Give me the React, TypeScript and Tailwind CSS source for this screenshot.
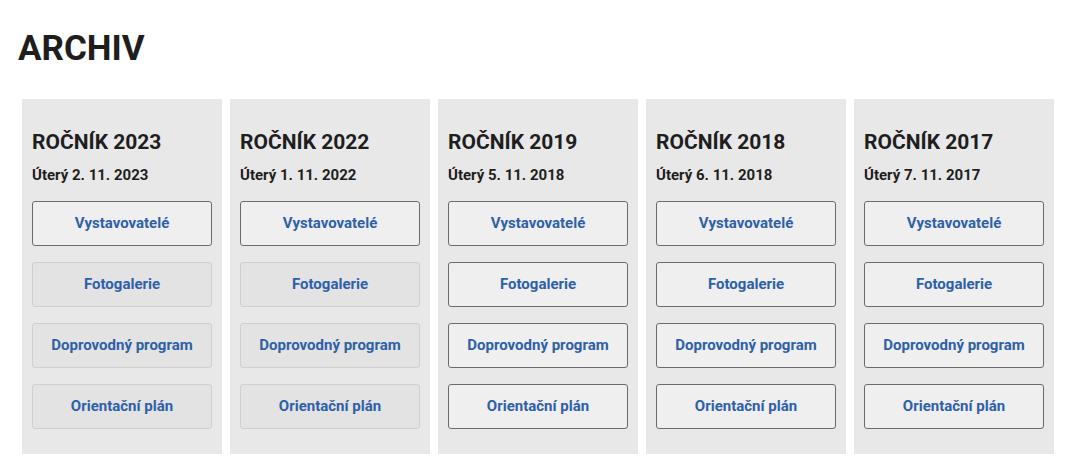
import React from 'react';

interface Rocnik {
  year: string;
  date: string;
  // first two years have only exhibitors published, the rest look muted
  muted: boolean;
}

const rocniky: Rocnik[] = [
  { year: '2023', date: 'Úterý 2. 11. 2023', muted: true },
  { year: '2022', date: 'Úterý 1. 11. 2022', muted: true },
  { year: '2019', date: 'Úterý 5. 11. 2018', muted: false },
  { year: '2018', date: 'Úterý 6. 11. 2018', muted: false },
  { year: '2017', date: 'Úterý 7. 11. 2017', muted: false },
];

const links = ['Vystavovatelé', 'Fotogalerie', 'Doprovodný program', 'Orientační plán'];

const ArchiveButton: React.FC<{ label: string; muted: boolean }> = ({ label, muted }) => (
  <a
    href="#"
    className={`flex h-[45px] items-center justify-center rounded-[3px] border text-[15px] font-bold text-[#2e60a8] ${
      muted ? 'border-[#cfcfcf] bg-[#e3e3e3]' : 'border-[#6b6b6b] bg-[#efefef]'
    }`}
  >
    {label}
  </a>
);

export default function App() {
  return (
    <div className="min-h-screen bg-white px-[18px] pt-[28px] font-['Roboto',sans-serif] text-[#1e1e1e]">
      <h1 className="text-[35px] font-bold leading-[42px]">ARCHIV</h1>
      <div className="mt-[29px] flex gap-[8px] pl-[4px]">
        {rocniky.map((r) => (
          <div key={r.year} className="w-[200px] bg-[#e8e8e8] px-[10px] pt-[30px] pb-[25px]">
            <h2 className="text-[21px] font-bold leading-[26px]">ROČNÍK {r.year}</h2>
            <p className="mt-[10px] text-[15px] font-bold leading-[20px]">{r.date}</p>
            <div className="mt-[16px] flex flex-col gap-[16px]">
              {links.map((l, i) => (
                <ArchiveButton key={l} label={l} muted={r.muted && i > 0} />
              ))}
            </div>
          </div>
        ))}
      </div>
    </div>
  );
}
